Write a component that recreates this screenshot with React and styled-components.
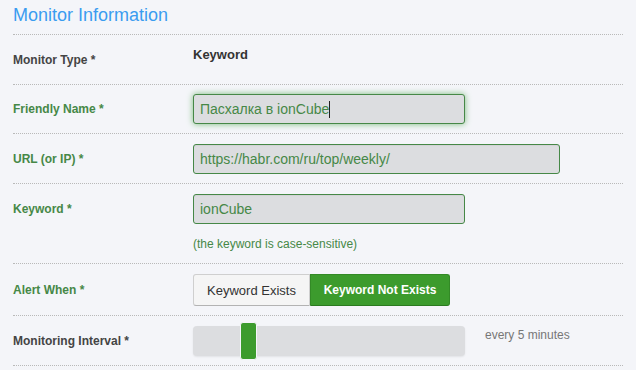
import React from "react";
import styled, { createGlobalStyle } from "styled-components";

const Global = createGlobalStyle`
  html, body { margin: 0; padding: 0; background: #f4f5f9; }
  body { font-family: "Liberation Sans", Arial, sans-serif; }
`;

const Page = styled.div`
  padding: 0 0 0 13px;
  width: 623px;
  box-sizing: border-box;
`;

const Title = styled.h2`
  margin: 0;
  height: 34px;
  line-height: 30px;
  font-size: 18px;
  font-weight: normal;
  color: #3a9cf0;
`;

const Row = styled.div`
  display: flex;
  align-items: flex-start;
  border-top: 1px dotted #b9b9b9;
  padding: ${(p) => p.$pad || "9px 0 9px"};
`;

const Label = styled.div`
  width: 180px;
  flex: none;
  font-size: 12px;
  font-weight: bold;
  line-height: ${(p) => p.$lh || "30px"};
  color: ${(p) => (p.$ok ? "#468847" : "#444")};
  padding-top: ${(p) => p.$shift || "0"};
`;

const Controls = styled.div`
  display: flex;
  flex-direction: column;
  align-items: flex-start;
`;

const StaticValue = styled.div`
  font-size: 13px;
  font-weight: bold;
  color: #333;
  line-height: 22px;
  height: 31px;
`;

const Field = styled.div`
  box-sizing: border-box;
  width: ${(p) => p.$w}px;
  height: 30px;
  border: 1px solid #468847;
  border-radius: 3px;
  background: #dcdde0;
  color: #468847;
  font-size: 14px;
  line-height: 28px;
  padding: 0 6px;
  white-space: nowrap;
  box-shadow: ${(p) =>
    p.$focus ? "0 0 6px #7aba7b" : "inset 0 1px 1px rgba(0,0,0,0.05)"};
`;

const Caret = styled.span`
  display: inline-block;
  width: 1px;
  height: 17px;
  background: #222;
  vertical-align: -4px;
`;

const Help = styled.div`
  margin-top: 10px;
  font-size: 12px;
  line-height: 20px;
  color: #468847;
`;

const Group = styled.div`
  display: flex;
`;

const Toggle = styled.div`
  box-sizing: border-box;
  height: 32px;
  display: flex;
  align-items: center;
  justify-content: center;
  white-space: nowrap;
  font-size: ${(p) => (p.$active ? "12px" : "13px")};
  font-weight: ${(p) => (p.$active ? "bold" : "normal")};
  color: ${(p) => (p.$active ? "#fff" : "#333")};
  background: ${(p) => (p.$active ? "#3c9b2d" : "#f5f5f5")};
  border: 1px solid ${(p) => (p.$active ? "#338a26" : "#cfcfcf")};
  border-bottom-color: ${(p) => (p.$active ? "#2b7a20" : "#b3b3b3")};
  border-radius: ${(p) => (p.$first ? "3px 0 0 3px" : "0 3px 3px 0")};
  width: ${(p) => p.$w}px;
`;

const SliderWrap = styled.div`
  display: flex;
  align-items: center;
  gap: 20px;
`;

const Track = styled.div`
  position: relative;
  width: 272px;
  height: 30px;
  border-radius: 4px;
  background: #dcdde0;
  box-shadow: 0 1px 2px rgba(0, 0, 0, 0.08);
`;

const Thumb = styled.div`
  position: absolute;
  top: -4px;
  left: 47px;
  box-sizing: border-box;
  width: 17px;
  height: 38px;
  border-radius: 3px;
  background: #3c9b2d;
  border: 1px solid #f4f5f9;
`;

const Note = styled.div`
  font-size: 12px;
  color: #777;
  margin-top: -12px;
`;

export default function App() {
  return (
    <>
      <Global />
      <Page>
        <Title>Monitor Information</Title>
        <Row>
          <Label $shift="1px">Monitor Type *</Label>
          <StaticValue>Keyword</StaticValue>
        </Row>
        <Row>
          <Label $ok>Friendly Name *</Label>
          <Field $w={272} $focus>
            Пасхалка в ionCube
            <Caret />
          </Field>
        </Row>
        <Row $pad="10px 0 9px">
          <Label $ok>URL (or IP) *</Label>
          <Field $w={367}>https://habr.com/ru/top/weekly/</Field>
        </Row>
        <Row $pad="10px 0 9px">
          <Label $ok>Keyword *</Label>
          <Controls>
            <Field $w={272}>ionCube</Field>
            <Help>(the keyword is case-sensitive)</Help>
          </Controls>
        </Row>
        <Row $pad="10px 0 9px">
          <Label $ok $lh="32px">Alert When *</Label>
          <Group>
            <Toggle $first $w={117}>Keyword Exists</Toggle>
            <Toggle $active $w={140}>Keyword Not Exists</Toggle>
          </Group>
        </Row>
        <Row $pad="10px 0 9px">
          <Label>Monitoring Interval *</Label>
          <SliderWrap>
            <Track>
              <Thumb />
            </Track>
            <Note>every 5 minutes</Note>
          </SliderWrap>
        </Row>
        <Row $pad="0" />
      </Page>
    </>
  );
}
